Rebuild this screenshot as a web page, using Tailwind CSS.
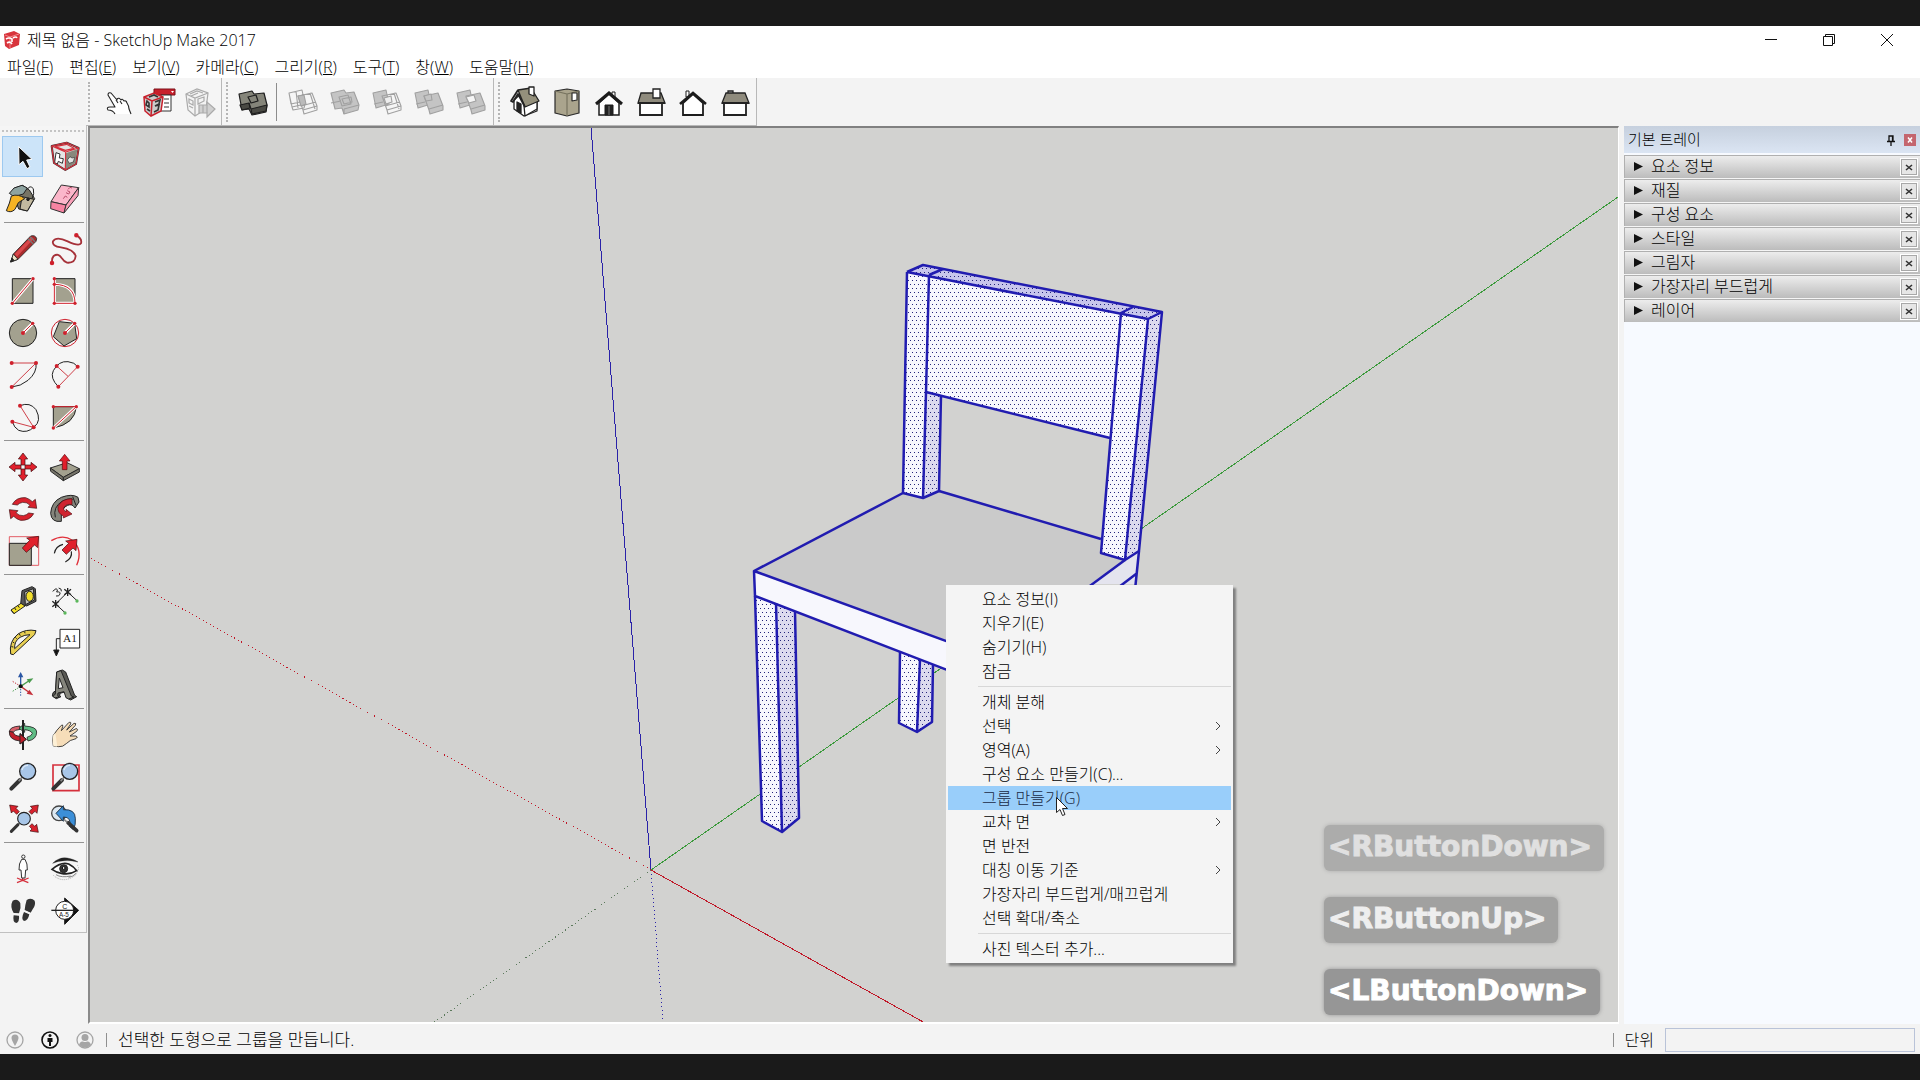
<!DOCTYPE html>
<html lang="ko">

<head>
    <meta charset="UTF-8">
    <meta name="viewport" content="width=device-width, initial-scale=1.0">
    <title>제목 없음 - SketchUp Make 2017</title>
    <script src="https://cdn.jsdelivr.net/npm/@tailwindcss/browser@4"></script>
    <style>
        body {
            font-family: 'Open Sans', 'Noto Sans CJK KR', sans-serif;
        }
    </style>
</head>

<body class="h-screen flex flex-col bg-[#1a1a1a] py-[26px] text-black text-base font-light leading-6 overflow-hidden">
    <div class="flex-1 min-h-0 flex flex-col bg-[#f3f3f3]">

        <!-- Title bar -->
        <header class="h-7 flex items-center bg-white pl-1 pr-1 shrink-0">
            <svg class="w-4 h-5" viewBox="0 0 16 20">
                <path d="M0 4 10 1 16 4 15 15 5 19 1 16Z" fill="#d8343c" />
                <path d="M1 5 6 7 15 4M6 7v11" stroke="#f0888c" fill="none" />
                <path d="M2 9q3-2 6 0v3M3 13q3-2 5 1M9 8q3-2 4 0" stroke="#fff" stroke-width="1.6" fill="none" />
            </svg>
            <h1 class="ml-[7px] flex-1">제목 없음 - SketchUp Make 2017</h1>
            <button class="w-[58px] h-7 flex items-center justify-center" aria-label="최소화">
                <svg class="w-3 h-3" viewBox="0 0 12 12" stroke="#111"><path d="M0 5.500h12" /></svg>
            </button>
            <button class="w-[58px] h-7 flex items-center justify-center" aria-label="이전 크기로 복원">
                <svg class="w-3 h-3" viewBox="0 0 12 12" stroke="#111" fill="none"><path d="M.5 2.500h9v9h-9zM2.500 2.500v-2h9v9h-2" /></svg>
            </button>
            <button class="w-[58px] h-7 flex items-center justify-center" aria-label="닫기">
                <svg class="w-3 h-3" viewBox="0 0 12 12" stroke="#111"><path d="M0 0 12 12M12 0 0 12" /></svg>
            </button>
        </header>

        <!-- Menu bar -->
        <nav class="h-6 flex items-center gap-4 bg-white pl-[7px] pt-px shrink-0">
            <button>파일(<u>F</u>)</button>
            <button>편집(<u>E</u>)</button>
            <button>보기(<u>V</u>)</button>
            <button>카메라(<u>C</u>)</button>
            <button>그리기(<u>R</u>)</button>
            <button>도구(<u>T</u>)</button>
            <button>창(<u>W</u>)</button>
            <button>도움말(<u>H</u>)</button>
        </nav>

        <!-- Top toolbars -->
        <div class="h-12 flex shrink-0 pl-[86px]">
            <div class="flex items-center border-r border-b border-[#b8b8b8] bg-[#f5f5f5]">
                <div class="w-[10px] h-10 border-l-2 border-dotted border-[#b5b5b5] ml-[2px] mr-[-3px]"></div>
                <button class="w-[42px] h-[42px]" aria-label="손">
                    <svg viewBox="-2 0 42 42" fill="#fff" stroke="#222" stroke-width="1.1" stroke-linejoin="round">
                        <path d="M18 33q-2-4-7-4-2-3 2-3l5 0-7-12q0-3 3-2l6 7 0-1q2-2 4 1 1-2 3 1 2-1 3 2 2 3 2 6l2 5" />
                        <path d="m19 19 2 3M23 20l2 3" fill="none" />
                    </svg>
                </button>
                <button class="w-[42px] h-[42px]" aria-label="3D Warehouse">
                    <svg viewBox="0 0 42 42">
                        <path d="M17 8h21v6H17z" fill="#c8202c" stroke="#7a1018" />
                        <path d="M34 10h3l-1.500 2z" fill="#fff" />
                        <path d="M24 14h10v16H23z" fill="#fff" stroke="#333" />
                        <path d="M27 18h5M27 22h5M27 26h5" stroke="#333" />
                        <path d="M7 16 17 12 26 16 24 30 14 35 8 30Z" fill="#ccc" stroke="#c8202c" stroke-width="1.500" />
                        <path d="m7 16 8 4 11-4M15 20l-1 15" fill="none" stroke="#c8202c" stroke-width="1.500" />
                        <path d="m10 20 2 2v4l-3-2zM10 28l3 2M18 21l5-2-1 4-4 2 4-1-1 5-4 2M12 16l5-2 4 2" fill="none" stroke="#333" stroke-width="1.600" />
                    </svg>
                </button>
                <button class="w-[42px] h-[42px]" aria-label="Extension Warehouse" disabled>
                    <svg viewBox="0 0 42 42" fill="#f3f3f3" stroke="#aaa" stroke-width="1.200">
                        <path d="M7 13 18 8 29 12 27 28 16 35 9 29Z" />
                        <path d="m7 13 9 4 13-5M16 17v18M10 18l4 2v4l-4-2zM10 25l4 2M19 18l6-2v4l-6 3zM11 13l7-3 6 2M12 15l7-3" fill="none" />
                        <path d="M20 24h8v-3l8 7-8 8v-4h-8z" fill="#d0d0d0" />
                        <path d="M24 24v8M28 24v8" />
                    </svg>
                </button>
            </div>
            <div class="flex items-center pr-px border-r border-b border-[#b8b8b8] bg-[#f5f5f5]">
                <div class="w-[10px] h-10 border-l-2 border-dotted border-[#b5b5b5] ml-1 mr-[-4px]"></div>
                <button class="w-[42px] h-[42px]" aria-label="외부 셸">
                    <svg viewBox="0 0 42 42" fill="#85857a" stroke="#1e1e1e" stroke-width="1.200" stroke-linejoin="round">
                        <path d="m7 13 13-3 2 3 10-1 3 12-1 7-14 3-3-6-7 1z" />
                        <path d="m19 28 16-4-1 6-14 3z" fill="#4a4a44" />
                        <path d="m8 24 9-2 1 5-8 2z" fill="#4a4a44" />
                        <path d="m16 16 8-2 2 6-7 2zM17 22l2 6" fill="none" />
                    </svg>
                </button>
                <div class="w-px h-[38px] bg-[#8c8c8c] ml-[2px] mr-[5px]"></div>
                <button class="w-[42px] h-[42px]" aria-label="교차" disabled>
                    <svg viewBox="0 0 42 42" fill="none" stroke="#a0a0a0" stroke-width="1.100" stroke-linejoin="round">
                        <path d="m7 12 13-3 3 14-13 3zM10 26l1 3 11-2 1-4M7 12l2 11 13-3M16 15l14-3 5 13-14 4zM21 29l1 4 13-4v-4M19 25l15-4M28 12l5 16M14 10l2 17" />
                        <path d="m16 15 6-1 2 9-5 2z" fill="#bbb" />
                    </svg>
                </button>
                <button class="w-[42px] h-[42px]" aria-label="결합" disabled>
                    <svg viewBox="0 0 42 42" fill="#c4c4c4" stroke="#a0a0a0" stroke-width="1.100" stroke-linejoin="round">
                        <path d="m7 12 13-3 2 3 8-1 5 13-1 5-14 4-2-6-7 1z" />
                        <path d="m7 22 10-2M20 28l15-4M15 16l9-2 3 9-9 2zM18 18l9-2 1 5-8 2zM20 28v5" fill="none" />
                    </svg>
                </button>
                <button class="w-[42px] h-[42px]" aria-label="빼기" disabled>
                    <svg viewBox="0 0 42 42" fill="none" stroke="#a0a0a0" stroke-width="1.100" stroke-linejoin="round">
                        <path d="m7 12 13-3 3 14-13 4zM8 23l9-2" fill="#c4c4c4" />
                        <path d="m16 15 14-3 5 13-14 4zM21 29l1 4 13-4v-4M19 25l15-4M28 12l5 16" />
                        <path d="m18 17 7-2 1 6-6 2z" fill="#eee" />
                    </svg>
                </button>
                <button class="w-[42px] h-[42px]" aria-label="자르기" disabled>
                    <svg viewBox="0 0 42 42" fill="#c4c4c4" stroke="#a0a0a0" stroke-width="1.100" stroke-linejoin="round">
                        <path d="m7 12 13-3 3 14-13 4zM8 23l9-2" />
                        <path d="m16 15 14-3 5 13v4l-13 4-1-4zM21 28l14-4M16 15l5 14" />
                        <path d="m16 15 7-2 1 6-6 1z" />
                    </svg>
                </button>
                <button class="w-[42px] h-[42px]" aria-label="분할" disabled>
                    <svg viewBox="0 0 42 42" fill="#c4c4c4" stroke="#a0a0a0" stroke-width="1.100" stroke-linejoin="round">
                        <path d="m7 12 13-3 3 14-13 4zM8 23l9-2" />
                        <path d="m16 15 14-3 5 13v4l-13 4-1-4zM21 28l14-4" />
                        <path d="m16 16 8-2 2 6-7 2z" fill="#f5f5f5" />
                    </svg>
                </button>
            </div>
            <div class="flex items-center border-r border-b border-[#b8b8b8] bg-[#f5f5f5]">
                <div class="w-[10px] h-10 border-l-2 border-dotted border-[#b5b5b5] ml-1 mr-[-4px]"></div>
                <button class="w-[42px] h-[42px]" aria-label="등각 투영">
                    <svg viewBox="0 0 42 42" fill="#fff" stroke="#222" stroke-width="1.300" stroke-linejoin="round">
                        <path d="m10 19 10-9 13 11v9l-13 5-10-7z" />
                        <path d="m20 25 13-6v9l-12 7z" />
                        <path d="m14 9 13-2 8 13-14 6z" fill="#94907c" />
                        <path d="m14 9-7 11 2 1 5-8 7 13" stroke-width="1.800" fill="none" />
                        <path d="M25 6h5v9l-5-2z" />
                        <path d="m13 21 4 2v9l-4-2z" fill="#222" />
                    </svg>
                </button>
                <button class="w-[42px] h-[42px]" aria-label="평면">
                    <svg viewBox="0 0 42 42" fill="#aaa48d" stroke="#2a2a2a" stroke-width="1.200" stroke-linejoin="round">
                        <path d="m9 10 12-2 12 2v22l-12 3-12-3z" />
                        <path d="m9 10 12 3 12-3M21 13v22" fill="none" stroke="#77735f" />
                        <path d="M26 12h5v7l-5 1z" fill="#fff" />
                    </svg>
                </button>
                <button class="w-[42px] h-[42px]" aria-label="정면">
                    <svg viewBox="0 0 42 42" stroke="#1c1c1c">
                        <path d="M24 11h3v5h-3z" fill="#fff" />
                        <path d="M11 22 21 13 31 22v12H11z" fill="#fff" stroke-width="1.500" />
                        <path d="M8 23 21 12 34 23" fill="none" stroke-width="3" />
                        <path d="M17 24h8v10h-8z" fill="#222" />
                        <path d="M21 25v9" stroke="#777" />
                    </svg>
                </button>
                <button class="w-[42px] h-[42px]" aria-label="오른쪽">
                    <svg viewBox="0 0 42 42" stroke="#222" stroke-width="1.300">
                        <path d="M10 22h22v12H10z" fill="#fff" stroke-width="1.800" />
                        <path d="M11 12h20l4 10H8z" fill="#8f8b7d" />
                        <path d="M8 22h27" stroke-width="2" />
                        <path d="M23 8h7v9h-7z" fill="#fff" />
                    </svg>
                </button>
                <button class="w-[42px] h-[42px]" aria-label="뒤">
                    <svg viewBox="0 0 42 42" stroke="#1c1c1c" fill="#fff">
                        <path d="M14 10h3v6h-3z" />
                        <path d="M11 22 21 13 31 22v12H11z" stroke-width="1.800" />
                        <path d="M8 23 21 12 34 23" fill="none" stroke-width="2.600" />
                    </svg>
                </button>
                <button class="w-[42px] h-[42px]" aria-label="왼쪽">
                    <svg viewBox="0 0 42 42" stroke="#222" stroke-width="1.300">
                        <path d="M14 10h5v3h-5z" fill="#ddd" />
                        <path d="M10 22h22v12H10z" fill="#fff" stroke-width="1.800" />
                        <path d="M12 12h19l4 10H8z" fill="#8f8b7d" />
                        <path d="M8 22h27" stroke-width="2" />
                    </svg>
                </button>
            </div>
        </div>

        <main class="flex-1 min-h-0 flex">
            <!-- Large tool set -->
            <aside class="w-[88px] shrink-0">
                <div class="w-[87px] pl-[2px] border-r border-b border-[#c0c0c0] bg-[#f5f5f5]">
                    <div class="h-[10px] pt-1 pr-[2px]"><div class="border-t-2 border-dotted border-[#c4c4c4]"></div></div>
                    <div class="grid grid-cols-2 w-[84px]">
                        <button class="h-[42px] relative" aria-label="선택">
                            <span class="absolute inset-0 mb-px mr-px bg-[#cce4f9] border border-[#9dc9f0]"></span>
                            <svg class="relative" viewBox="6 48 126 126"><path d="m56 80 1 54 12-10 12 22 9-5-10-21 16-2z" fill="#111" stroke="#fff" stroke-width="3" /></svg>
                        </button>
                        <button class="h-[42px]" aria-label="구성 요소 만들기">
                            <svg viewBox="132 48 126 126" stroke-linejoin="round">
                                <path d="m155 78 45-10 36 16-8 48-32 18-34-21z" fill="#e5e5e5" stroke="#333" stroke-width="6" />
                                <path d="m196 100 36-12-6 42-28 17z" fill="#88887c" />
                                <path d="m168 98 12 4-2 12 12 2-3 14-12-6-3 8-8-4z" fill="#fff" stroke="#333" stroke-width="3" />
                                <path d="m202 120 8-10 6 4 8-2-4 14-12 4z" fill="#e5e5e5" stroke="#333" stroke-width="2" />
                                <path d="m155 78 45-10 36 16-8 48-32 18-34-21zM155 78l42 18 39-12M197 96l-1 54M166 80l34-7 22 12-26 6z" fill="none" stroke="#d5303c" stroke-width="3.500" />
                            </svg>
                        </button>
                        <button class="h-[42px]" aria-label="페인트 통">
                            <svg viewBox="6 174 126 126" stroke="#222" stroke-width="3" stroke-linejoin="round">
                                <path d="m44 204 24-8 20 14 16 26-22 37-26-6-14-40z" fill="#777465" />
                                <path d="m66 230 36 8-20 35-22-6z" fill="#c3baa0" />
                                <path d="m28 220 14-16 24-8 16 8-12 18-28 8z" fill="#8ea3a0" />
                                <path d="M34 228q-4 20-15 44 14 8 26-4l10-20 19-12q-18-16-40-8z" fill="#f5b324" />
                                <path d="M82 208q8-14 18-2 4 16-4 30" fill="none" />
                                <circle cx="84" cy="238" r="4" fill="#222" />
                            </svg>
                        </button>
                        <button class="h-[42px]" aria-label="지우개">
                            <svg viewBox="132 174 126 126" stroke="#333" stroke-width="3" stroke-linejoin="round">
                                <path d="m184 195 52 8-38 52-45-10z" fill="#fbb6ca" />
                                <path d="m153 245 45 10-6 24-40-13z" fill="#f783a2" />
                                <path d="m198 255 38-52-2 24-42 52z" fill="#f9a0b8" />
                                <path d="m190 236 6-8 6 4m-4-14 8 4 4-6-8-4m2-4 6-6 6 2" stroke="#b54b68" fill="none" />
                            </svg>
                        </button>
                    </div>
                    <div class="h-px bg-[#949494] mt-[2px] mb-[5px] mx-[2px] w-20"></div>
                    <div class="grid grid-cols-2 w-[84px]">
                        <button class="h-[42px]" aria-label="선">
                            <svg viewBox="6 324 126 126" stroke="#222" stroke-width="2.500" stroke-linejoin="round">
                                <path d="m32 426 8-24 52-54q14-4 18 8l-2 8-54 54z" fill="#a92b2c" />
                                <path d="m44 402 50-52 7 6-50 54z" fill="#d9484b" stroke="none" />
                                <path d="m32 426 8-24 14 16z" fill="#efe4c8" />
                                <path d="m32 426 4-12 6 7z" fill="#222" />
                                <path d="m84 356 16 16M90 350l16 16" stroke="#777" stroke-width="4" />
                            </svg>
                        </button>
                        <button class="h-[42px]" aria-label="자유형">
                            <svg viewBox="132 324 126 126" fill="none" stroke="#a63139" stroke-width="5.500">
                                <path d="M229 346q18 10 14 24-6 10-40-6-34-16-44 0-4 14 24 18 38 6 44 26-2 22-26 20-8-2-16-14-10-16-24-6-6 6-5 20" />
                                <circle cx="229" cy="346" r="4" fill="#cf202c" stroke="#cf202c" /><circle cx="156" cy="429" r="4" fill="#cf202c" stroke="#cf202c" />
                            </svg>
                        </button>
                        <button class="h-[42px]" aria-label="직사각형">
                            <svg viewBox="6 450 126 126">
                                <path d="M37 476h62v74H37z" fill="#a3a18f" stroke="#222" stroke-width="3" />
                                <path d="m37 550 62-74" stroke="#fff" stroke-width="9" /><path d="m37 550 62-74" stroke="#cf202c" stroke-width="3" />
                                <circle cx="37" cy="550" r="5" fill="#cf202c" /><circle cx="99" cy="476" r="5" fill="#cf202c" />
                            </svg>
                        </button>
                        <button class="h-[42px]" aria-label="회전된 직사각형">
                            <svg viewBox="132 450 126 126" fill="none">
                                <path d="M163 476h62v74h-62z" fill="#a3a18f" stroke="#222" stroke-width="3" />
                                <path d="M163 476v74h62q0-56-62-57" stroke="#fff" stroke-width="9" /><path d="M163 476v74h62q0-56-62-57" stroke="#cf202c" stroke-width="3" />
                                <g fill="#cf202c"><circle cx="163" cy="476" r="5" /><circle cx="163" cy="493" r="5" /><circle cx="163" cy="550" r="5" /><circle cx="225" cy="550" r="5" /></g>
                            </svg>
                        </button>
                        <button class="h-[42px]" aria-label="원">
                            <svg viewBox="6 576 126 126">
                                <circle cx="69" cy="639" r="41" fill="#a3a18f" stroke="#222" stroke-width="3" />
                                <path d="m69 639 29-29" stroke="#fff" stroke-width="10" /><path d="m69 639 29-29" stroke="#cf202c" stroke-width="3" />
                                <circle cx="69" cy="639" r="6" fill="#cf202c" /><circle cx="98" cy="610" r="5" fill="#cf202c" />
                            </svg>
                        </button>
                        <button class="h-[42px]" aria-label="다각형">
                            <svg viewBox="132 576 126 126">
                                <circle cx="195" cy="639" r="41" fill="none" stroke="#cf202c" stroke-width="3" />
                                <path d="m224 610 6 46-38 22-32-28 18-45z" fill="#a3a18f" stroke="#222" stroke-width="3" />
                                <path d="m195 639 29-29" stroke="#fff" stroke-width="10" /><path d="m195 639 29-29" stroke="#cf202c" stroke-width="3" />
                                <circle cx="195" cy="639" r="6" fill="#cf202c" /><circle cx="224" cy="610" r="5" fill="#cf202c" />
                            </svg>
                        </button>
                        <button class="h-[42px]" aria-label="호">
                            <svg viewBox="6 702 126 126" fill="none" stroke-width="3">
                                <path d="M108 729q4 28-24 52-22 18-49 20" stroke="#222" />
                                <path d="M35 729h73L35 801" stroke="#cf4049" />
                                <g fill="#cf202c"><circle cx="35" cy="729" r="6" /><circle cx="108" cy="729" r="6" /><circle cx="35" cy="801" r="6" /></g>
                            </svg>
                        </button>
                        <button class="h-[42px]" aria-label="2점 호">
                            <svg viewBox="132 702 126 126" fill="none" stroke-width="3">
                                <path d="M175 800q-26-26-15-48 16-30 44-27 20 2 29 15" stroke="#222" />
                                <path d="m175 800 58-60M170 738l34 31" stroke="#cf4049" />
                                <g fill="#cf202c"><circle cx="170" cy="738" r="6" /><circle cx="233" cy="740" r="6" /><circle cx="175" cy="800" r="6" /></g>
                            </svg>
                        </button>
                        <button class="h-[42px]" aria-label="3점 호">
                            <svg viewBox="6 828 126 126" fill="none" stroke-width="3">
                                <path d="M60 857q30-12 48 12 18 34-6 52-20 20-46 10-14-8-19-26" stroke="#222" />
                                <path d="m60 857 41 65-64-17" stroke="#cf4049" />
                                <g fill="#cf202c"><circle cx="60" cy="857" r="6" /><circle cx="37" cy="905" r="6" /><circle cx="101" cy="922" r="6" /></g>
                            </svg>
                        </button>
                        <button class="h-[42px]" aria-label="파이">
                            <svg viewBox="132 828 126 126" stroke-width="3">
                                <path d="M160 860h69q-4 52-69 64z" fill="#a3a18f" stroke="#222" />
                                <path d="m160 924 69-64" stroke="#fff" stroke-width="9" /><path d="m160 924 69-64h-69" stroke="#cf202c" fill="none" />
                                <g fill="#cf202c"><circle cx="160" cy="860" r="5" /><circle cx="229" cy="860" r="5" /><circle cx="160" cy="924" r="5" /></g>
                            </svg>
                        </button>
                    </div>
                    <div class="h-px bg-[#949494] mt-[2px] mb-[5px] mx-[2px] w-20"></div>
                    <div class="grid grid-cols-2 w-[84px]">
                        <button class="h-[42px]" aria-label="이동">
                            <svg viewBox="6 48 126 126" fill="#e0202c" stroke="#3a0a0c" stroke-width="2">
                                <path id="arm" d="m69 69 14 18h-8v18H63V87h-8z" />
                                <use href="#arm" transform="rotate(90 69 111)" /><use href="#arm" transform="rotate(180 69 111)" /><use href="#arm" transform="rotate(270 69 111)" />
                            </svg>
                        </button>
                        <button class="h-[42px]" aria-label="밀기/끌기">
                            <svg viewBox="132 48 126 126" stroke="#2a2a2a" stroke-width="3" stroke-linejoin="round">
                                <path d="m151 114 50-16 37 18-48 26z" fill="#a3a18f" />
                                <path d="m151 114 39 28v10l-38-28zM238 116v10l-48 26v-10z" fill="#77756a" />
                                <path d="m194 73 16 20h-9v26h-14V93h-9z" fill="#e0202c" stroke="#5a0a10" stroke-width="2" />
                            </svg>
                        </button>
                        <button class="h-[42px]" aria-label="회전">
                            <svg viewBox="6 174 126 126" fill="#d8222d" stroke="#3a0a0c" stroke-width="2">
                                <path id="turn" d="M37 223q12-22 40-20 12 4 20 12l9-7 4 27-26-3 6-6q-8-10-22-9-10 2-16 8z" />
                                <use href="#turn" transform="rotate(180 69 237)" />
                            </svg>
                        </button>
                        <button class="h-[42px]" aria-label="따라가기">
                            <svg viewBox="132 174 126 126" stroke="#222" stroke-width="3" stroke-linejoin="round">
                                <path d="M184 274q-30 4-32-24 2-34 32-48 32-12 50 0l3 14-12 18q-8-14-22-8-18 8-19 28z" fill="#85857c" />
                                <path d="M166 262q-8-30 20-48 20-10 32-6M218 200l10 26" fill="none" />
                                <path d="M216 206q-32 0-42 24-2 20 16 28l0 6 26-12-18-14v8q-10-6-6-14 8-12 24-8z" fill="#cf2430" stroke="#5a0a10" stroke-width="2" />
                            </svg>
                        </button>
                        <button class="h-[42px]" aria-label="배율">
                            <svg viewBox="6 300 126 126">
                                <path d="M28 320h88v86H28z" fill="none" stroke="#e0404a" stroke-width="2.500" />
                                <path d="M28 340h66v66H28z" fill="#a3a18f" stroke="#222" stroke-width="3" />
                                <path d="m116 319-3 34-9-8-25 22-12-13 22-23-9-7z" fill="#e0202c" stroke="#3a0a0c" stroke-width="2" />
                            </svg>
                        </button>
                        <button class="h-[42px]" aria-label="오프셋">
                            <svg viewBox="132 300 126 126" fill="none">
                                <path d="M154 332q34-20 62-2 34 28 14 76" stroke="#e0303a" stroke-width="4" />
                                <path d="M163 370q4-22 26-27M214 364q4 20-18 32" stroke="#222" stroke-width="3.500" />
                                <path d="m231 328-3 34-9-8-20 19-13-13 20-20-9-7z" fill="#e0202c" stroke="#3a0a0c" stroke-width="2" />
                            </svg>
                        </button>
                    </div>
                    <div class="h-px bg-[#949494] mt-[2px] mb-[5px] mx-[2px] w-20"></div>
                    <div class="grid grid-cols-2 w-[84px]">
                        <button class="h-[42px]" aria-label="줄자 도구">
                            <svg viewBox="6 450 126 126" stroke="#222" stroke-width="3" stroke-linejoin="round">
                                <path d="m66 482 30-12 10 6 2 38-28 14-18-6z" fill="#555" />
                                <path d="m74 486 26-10 3 34-27 14z" fill="#c4c4be" />
                                <ellipse cx="89" cy="499" rx="11" ry="15" fill="#f3df2c" />
                                <path d="m33 540 30-20 12 8-33 23z" fill="#f3df2c" />
                                <path d="m33 540 9 11M44 534l4 6M54 527l4 6" fill="none" />
                            </svg>
                        </button>
                        <button class="h-[42px]" aria-label="치수">
                            <svg viewBox="132 450 126 126" fill="none" stroke="#222" stroke-width="3">
                                <path d="m167 522 36-36M167 522l28 26M203 486l28 26" />
                                <path d="M157 514l20 16M157 530l20-16M167 510v24M193 478l20 16M193 494l20-16M203 474v24" stroke-width="4" />
                                <path d="m158 484 10-8q8 2 2 10 12-2 10 6-2 8-12 6M176 474q10 2 8 10" />
                                <circle cx="195" cy="549" r="5" fill="#5bb75b" stroke="none" /><circle cx="231" cy="513" r="5" fill="#5bb75b" stroke="none" />
                            </svg>
                        </button>
                        <button class="h-[42px]" aria-label="각도기">
                            <svg viewBox="6 576 126 126" stroke="#222" stroke-width="3" stroke-linejoin="round">
                                <path d="M32 672q-6-38 22-60 24-16 54-10l-4 12-64 60z" fill="#e8cf52" />
                                <path d="M44 656q-2-22 16-34 14-8 30-8z" fill="#f5f5f5" />
                                <path d="m34 650 6 1M38 636l5 3M46 622l4 4M58 612l3 5M74 605l1 5" />
                            </svg>
                        </button>
                        <button class="h-[42px]" aria-label="텍스트">
                            <svg viewBox="132 576 126 126" fill="none" stroke="#222" stroke-width="3">
                                <path d="M180 598h59v56h-59z" fill="#fff" />
                                <path d="M180 626h-11v36" /><path d="m161 660 8 18 8-18z" fill="#111" />
                                <text x="189" y="636" font-family="Liberation Serif, serif" font-size="34" fill="#222" stroke="none">A1</text>
                            </svg>
                        </button>
                        <button class="h-[42px]" aria-label="축">
                            <svg viewBox="6 702 126 126" fill="none" stroke-width="4">
                                <path d="M62 769v-28" stroke="#2b57a5" /><path d="m62 726-8 16h16z" fill="#2b57a5" />
                                <path d="m62 769 24-16" stroke="#4a9b4e" /><path d="m100 745-20 3 8 12z" fill="#4a9b4e" />
                                <path d="m62 769 24 17" stroke="#c5303a" /><path d="m100 796-20-5 8-12z" fill="#c5303a" />
                                <path d="M62 769v30" stroke="#2b57a5" stroke-dasharray="4 4" stroke-width="3" />
                                <path d="m62 769-26 16" stroke="#4a9b4e" stroke-dasharray="4 4" stroke-width="3" />
                                <path d="m62 769-26-16" stroke="#c5303a" stroke-dasharray="4 4" stroke-width="3" />
                                <circle cx="62" cy="769" r="6" fill="#111" />
                            </svg>
                        </button>
                        <button class="h-[42px]" aria-label="3D 텍스트">
                            <svg viewBox="132 702 126 126" stroke="#222" stroke-width="3" stroke-linejoin="round">
                                <path d="m170 726 17-6 10 6 27 70 6 4-18 10-14-8 1-8-5-8-14 4-1 8 4 2-14 6-12-8 2-10 8-6z" fill="#595954" />
                                <path d="m170 726 13-4 31 76 8 3-16 6-8-4-6-18-18 4-1 8 4 3-12 4-6-5 7-7z" fill="#85857c" />
                                <path d="m178 744-3 32 14-3z" fill="#f5f5f5" />
                            </svg>
                        </button>
                    </div>
                    <div class="h-px bg-[#949494] mt-[2px] mb-[5px] mx-[2px] w-20"></div>
                    <div class="grid grid-cols-2 w-[84px]">
                        <button class="h-[42px]" aria-label="궤도">
                            <svg viewBox="6 42 126 126" stroke="#222" stroke-width="2.500" stroke-linejoin="round">
                                <path d="M60 78q-32 2-32 18h12q4-6 20-8z" fill="#d8606a" />
                                <path d="M28 94q-2 26 32 29v9l19-14-19-18v9q-18-2-20-12z" fill="#c01f2c" />
                                <path d="M74 70v8q36 2 36 18 0 22-26 27l-3-11q14-4 16-12-4-9-23-11v8L57 85z" fill="#5fbd85" />
                                <path d="M69 60v90" stroke-width="6" />
                                <path d="M60 102v30l19-14z" fill="#c01f2c" />
                            </svg>
                        </button>
                        <button class="h-[42px]" aria-label="이동 보기">
                            <svg viewBox="132 42 126 126" fill="#f6ddb9" stroke="#222" stroke-width="2.500" stroke-linejoin="round">
                                <path d="M160 138q-4-20 0-32 10-16 24-30 6-4 4 4l-4 12 22-24q8-4 6 4l-12 18 22-20q8-2 4 6l-18 20 20-10q8 0 2 8l-20 14h18q8 2 0 8-20 4-28 14-12 12-24 10z" />
                                <path d="M160 138q-4-20 0-32l6-8 6 42z" fill="#fdf0d6" stroke="none" />
                            </svg>
                        </button>
                        <button class="h-[42px]" aria-label="확대/축소">
                            <svg viewBox="6 168 126 126" stroke="#222">
                                <path d="m34 266 26-26" stroke="#333" stroke-width="12" stroke-linecap="round" /><path d="m56 244 10-12" stroke="#888" stroke-width="5" />
                                <circle cx="83" cy="214" r="24" fill="#a8c6e8" stroke-width="4" />
                                <path d="M66 210q4-14 18-14" stroke="#dbe9f7" stroke-width="4" fill="none" />
                            </svg>
                        </button>
                        <button class="h-[42px]" aria-label="창 확대/축소">
                            <svg viewBox="132 168 126 126" stroke="#222">
                                <path d="M159 195h78v77h-78z" fill="none" stroke="#d5303c" stroke-width="5" />
                                <path d="m160 266 26-26" stroke="#333" stroke-width="12" stroke-linecap="round" /><path d="m182 244 10-12" stroke="#888" stroke-width="5" />
                                <circle cx="209" cy="214" r="24" fill="#a8c6e8" stroke-width="4" />
                                <path d="M192 210q4-14 18-14" stroke="#dbe9f7" stroke-width="4" fill="none" />
                            </svg>
                        </button>
                        <button class="h-[42px]" aria-label="범위 확대/축소">
                            <svg viewBox="6 294 126 126" stroke="#222">
                                <path d="m34 394 20-20" stroke="#333" stroke-width="9" stroke-linecap="round" />
                                <circle cx="72" cy="356" r="19" fill="#a8c6e8" stroke-width="3.500" />
                                <g fill="#d8222d" stroke="#3a0a0c" stroke-width="2">
                                    <path d="m29 315 25 4-6 6 10 10-8 8-10-10-6 6z" /><path d="m115 315-4 25-6-6-10 9-8-8 10-10-6-6z" /><path d="m115 397-25-4 6-6-8-8 8-8 8 8 6-6z" />
                                </g>
                            </svg>
                        </button>
                        <button class="h-[42px]" aria-label="이전">
                            <svg viewBox="132 294 126 126" stroke="#222" stroke-linejoin="round">
                                <circle cx="177" cy="340" r="22" fill="#dce8f2" stroke="#444" stroke-width="4" />
                                <path d="M168 340 190 317v12q36-2 36 26 2 20-6 34l-12-10q8-28-18-28v13z" fill="#3c8fd8" stroke="#123" stroke-width="2.500" />
                                <path d="m204 368 26 24" stroke="#333" stroke-width="11" stroke-linecap="round" /><path d="m192 358 10 9" stroke="#888" stroke-width="5" />
                            </svg>
                        </button>
                    </div>
                    <div class="h-px bg-[#949494] mt-[2px] mb-[5px] mx-[2px] w-20"></div>
                    <div class="grid grid-cols-2 w-[84px]">
                        <button class="h-[42px]" aria-label="카메라 배치">
                            <svg viewBox="6 444 126 126" fill="#fff" stroke="#333" stroke-width="3">
                                <path d="m51 534 34 14M86 534l-35 14M68 530v12" stroke="#d5303c" stroke-width="4" />
                                <circle cx="70" cy="470" r="5" />
                                <path d="M65 478h10q8 12 7 32h-5l-2 24H65l-2-24h-6q-1-20 8-32z" />
                            </svg>
                        </button>
                        <button class="h-[42px]" aria-label="둘러보기">
                            <svg viewBox="132 444 126 126" fill="none" stroke="#222">
                                <path d="M160 526q30 26 66 0l8-14q4-14-2-16" stroke="#aaa" stroke-width="3" stroke-dasharray="3 3" />
                                <path d="M158 490q20-20 44-16 22 4 32 12-24-6-40-4-20 0-36 8z" fill="#222" />
                                <path d="M156 508q28-24 50-16 16 8 24 20-22 14-46 8-14-2-28-12z" fill="#fff" stroke-width="5" />
                                <circle cx="191" cy="506" r="12" fill="#333" stroke-width="3" /><circle cx="191" cy="504" r="4" fill="#fff" stroke="#111" stroke-width="3" />
                                <path d="M168 524q16 10 44 4M206 532q14-2 22-12" stroke="#888" stroke-width="3" />
                            </svg>
                        </button>
                        <button class="h-[42px]" aria-label="걷기">
                            <svg viewBox="6 570 126 126" fill="#333">
                                <path d="M38 602q16-8 23 8 3 14-4 30l-16-1q-12-20-3-37zM41 646l16 1q2 18-8 22-12-2-8-23z" />
                                <path d="M80 600q14-8 24 2 4 12-6 26l-6 10-18-8q2-18 6-30zM72 636l16 7q-4 20-16 20-10-6 0-27z" />
                                <path d="m41 642 17 2M73 633l18 8" stroke="#f5f5f5" stroke-width="4" />
                            </svg>
                        </button>
                        <button class="h-[42px]" aria-label="단면">
                            <svg viewBox="132 570 126 126" stroke="#222" stroke-width="3">
                                <path d="m194 594 42 37-42 42z" fill="#111" />
                                <circle cx="194" cy="631" r="27" fill="#fff" />
                                <path d="M154 631h76" stroke-width="4" />
                                <text x="187" y="626" font-family="Liberation Sans, sans-serif" font-size="21" fill="#222" stroke="none">C</text>
                                <text x="177" y="650" font-family="Liberation Sans, sans-serif" font-size="19" fill="#222" stroke="none">A-5</text>
                            </svg>
                        </button>
                    </div>
                </div>
            </aside>

            <!-- Modelling view -->
            <section class="flex-1 min-w-0 relative border-t-2 border-l-2 border-t-[#808080] border-l-[#8a8a8a] border-b-2 border-b-white border-r border-r-white bg-[#d2d2d0]">
                <svg class="absolute inset-0 w-full h-full" viewBox="90 128 1528 894" preserveAspectRatio="xMinYMin slice">
                    <defs>
                        <pattern id="dots" width="4" height="8" patternUnits="userSpaceOnUse" shape-rendering="crispEdges">
                            <rect width="1" height="1" fill="#26267c" /><rect x="2" y="4" width="1" height="1" fill="#26267c" />
                        </pattern>
                    </defs>
                    <!-- Axes -->
                    <g fill="none" shape-rendering="crispEdges">
                        <path d="M591 127 651 870" stroke="#2a22a8" />
                        <path d="M651 870 663 1023" stroke="#2a22a8" stroke-dasharray="1 3" />
                        <path d="M651 870 1618 197" stroke="#3c9a3c" />
                        <path d="M651 870 433 1023" stroke="#5c7a5c" stroke-dasharray="1 3" />
                        <path d="M651 870 925 1023" stroke="#c01828" />
                        <path d="M651 870 89 557" stroke="#c01828" stroke-dasharray="1 3" />
                    </g>
                    <!-- Chair -->
                    <g stroke-linejoin="round">
                        <path d="M754 571 903 493 923 498 939 491 1101 539 1101 553 1125 560 1090 584 1060 684Z" fill="#cacaca" />
                        <path d="M1125 560 1139 551 1136 584 1090 584Z" fill="#e4e4ee" />
                        <path d="M754 571 1020 669V698L755 596Z" fill="#f7f7fd" />
                        <path d="M907 272 923 265 1162 312 1148 319Z" fill="#c8c6ec" />
                        <path d="M907 272 929 275 926 392 923 498 903 493ZM929 275 1121 313 1110 438 926 392ZM1121 313 1148 319 1125 560 1101 553ZM755 596 776 603 782 832 762 821ZM900 652 920 659 917 732 899 723Z" fill="#f7f7fd" />
                        <path d="M926 392 941 395 939 491 923 498ZM1148 319 1162 312 1139 551 1125 560ZM776 603 795 611 799 818 782 832ZM920 659 933 664 932 722 917 732Z" fill="#dcdaee" />
                        <path d="M907 272 923 265 1162 312 1139 551 1125 560 1101 553 1110 438 941 395 939 491 923 498 903 493ZM755 596 795 611 799 818 782 832 762 821ZM900 652 933 664 932 722 917 732 899 723Z" fill="url(#dots)" />
                        <g fill="none" stroke="#211cb0" stroke-width="2.500">
                            <path d="M907 272 923 265 1162 312 1139 551 1125 560 1101 553 1121 313M907 272 1148 319 1162 312M1148 319 1125 560M929 275 943 269M1121 313 1133 307" />
                            <path d="M907 272 903 493 923 498 939 491 941 395M929 275 926 392 923 498M926 392 1110 438" />
                            <path d="M903 493 754 571 1020 668M939 491 1101 539M754 571 755 596 1020 698M1125 560 1064 605M1139 551 1135 590M1136 574 1094 606" />
                            <path d="M755 596 762 821 782 832 799 818 795 611M776 603 782 832M900 652 899 723 917 732 932 722 933 664M920 659 917 732" />
                        </g>
                    </g>
                </svg>

                <!-- Pressed mouse buttons -->
                <div class="absolute right-[11px] bottom-[7px] w-[283px] flex flex-col items-start gap-[26px] font-['DejaVu_Sans'] font-bold text-[28px] leading-[44px]">
                    <div class="h-[46px] pl-1 pr-3 rounded-md bg-[#acacab] text-[#e0e0e0] shadow-[0_0_4px_#acacab] [-webkit-text-stroke:1px_currentColor]">&lt;RButtonDown&gt;</div>
                    <div class="h-[46px] pl-1 pr-3 rounded-md bg-[#a1a1a0] text-[#eeeeee] shadow-[0_0_4px_#a1a1a0] [-webkit-text-stroke:1px_currentColor]">&lt;RButtonUp&gt;</div>
                    <div class="h-[46px] pl-1 pr-3 rounded-md bg-[#969696] text-white shadow-[0_0_4px_#969696] [-webkit-text-stroke:1px_currentColor]">&lt;LButtonDown&gt;</div>
                </div>

                <!-- Context menu -->
                <div class="absolute left-[856px] top-[457px] w-[287px] p-[2px] bg-[#f4f4f4] shadow-[3px_3px_2px_#808080] flex flex-col" role="menu">
                    <button class="h-6 pl-[34px] text-left" role="menuitem">요소 정보(I)</button>
                    <button class="h-6 pl-[34px] text-left" role="menuitem">지우기(E)</button>
                    <button class="h-6 pl-[34px] text-left" role="menuitem">숨기기(H)</button>
                    <button class="h-6 pl-[34px] text-left" role="menuitem">잠금</button>
                    <hr class="ml-[30px] my-[3px] border-[#d7d7d7]">
                    <button class="h-6 pl-[34px] text-left" role="menuitem">개체 분해</button>
                    <button class="h-6 pl-[34px] pr-[10px] flex items-center justify-between" role="menuitem">선택
                        <svg class="w-[6px] h-2" viewBox="0 0 6 8" fill="none" stroke="#444"><path d="m1 0 4 4-4 4" /></svg></button>
                    <button class="h-6 pl-[34px] pr-[10px] flex items-center justify-between" role="menuitem">영역(A)
                        <svg class="w-[6px] h-2" viewBox="0 0 6 8" fill="none" stroke="#444"><path d="m1 0 4 4-4 4" /></svg></button>
                    <button class="h-6 pl-[34px] text-left" role="menuitem">구성 요소 만들기(C)...</button>
                    <button class="h-6 pl-[34px] text-left relative bg-[#99cefa] text-[#1a2a44]" role="menuitem">그룹 만들기(G)
                        <svg class="absolute left-[108px] top-[11px] w-3 h-[19px]" viewBox="0 0 12 19"><path d="M.5.500v15l3.500-3 2.500 6 2.500-1-2.500-6h5z" fill="#fff" stroke="#222" /></svg></button>
                    <button class="h-6 pl-[34px] pr-[10px] flex items-center justify-between" role="menuitem">교차 면
                        <svg class="w-[6px] h-2" viewBox="0 0 6 8" fill="none" stroke="#444"><path d="m1 0 4 4-4 4" /></svg></button>
                    <button class="h-6 pl-[34px] text-left" role="menuitem">면 반전</button>
                    <button class="h-6 pl-[34px] pr-[10px] flex items-center justify-between" role="menuitem">대칭 이동 기준
                        <svg class="w-[6px] h-2" viewBox="0 0 6 8" fill="none" stroke="#444"><path d="m1 0 4 4-4 4" /></svg></button>
                    <button class="h-6 pl-[34px] text-left" role="menuitem">가장자리 부드럽게/매끄럽게</button>
                    <button class="h-6 pl-[34px] text-left" role="menuitem">선택 확대/축소</button>
                    <hr class="ml-[30px] my-[3px] border-[#d7d7d7]">
                    <button class="h-6 pl-[34px] text-left" role="menuitem">사진 텍스터 추가...</button>
                </div>
            </section>

            <!-- Default tray -->
            <aside class="w-[301px] shrink-0 pl-[5px]">
                <div class="h-full bg-[#f7faff] flex flex-col">
                    <div class="h-[27px] mb-[2px] flex items-center pl-1 pr-1 bg-linear-to-b from-[#c6d0de] to-[#dbe5f3]">
                        <h2 class="flex-1 pb-[2px] text-[15px]">기본 트레이</h2>
                        <button class="w-3 h-3 mr-[7px]" aria-label="자동 숨기기"><svg viewBox="0 0 12 12" fill="none" stroke="#111" stroke-width="1.300"><path d="M4 7V2h4v5M2 7.500h8M6 8v4M7.500 2v5" /></svg></button>
                        <button class="w-3 h-3 bg-[#c4666e]" aria-label="트레이 닫기"><svg viewBox="0 0 12 12" stroke="#fff" stroke-width="1.500"><path d="m4 3.500 4 5M8 3.500l-4 5" /></svg></button>
                    </div>
                    <div id="trayPanels" class="flex flex-col gap-px bg-[#f5f5f5]"></div>
                </div>
            </aside>
        </main>

        <!-- Status bar -->
        <footer class="h-[30px] flex items-center shrink-0 pt-[2px] pl-[6px] pr-[5px]">
            <button class="w-[18px] h-[18px]" aria-label="위치"><svg viewBox="0 0 18 18"><circle cx="9" cy="9" r="8" fill="none" stroke="#a5a5a5" stroke-width="1.300" /><path d="M9 15Q5.500 9 5.500 7a3.500 3.500 0 0 1 7 0Q12.500 9 9 15z" fill="#a5a5a5" /></svg></button>
            <button class="w-[18px] h-[18px] ml-[17px]" aria-label="크레딧"><svg viewBox="0 0 18 18"><circle cx="9" cy="9" r="8" fill="none" stroke="#111" stroke-width="1.600" /><circle cx="9" cy="4.500" r="1.500" fill="#111" /><path d="M6.500 7h5v4H10v4H8v-4H6.500z" fill="#111" /></svg></button>
            <button class="w-[18px] h-[18px] ml-[17px]" aria-label="로그인"><svg viewBox="0 0 18 18" fill="#a5a5a5"><circle cx="9" cy="9" r="8" fill="none" stroke="#a5a5a5" stroke-width="1.300" /><circle cx="9" cy="6.500" r="3.500" /><path d="M3 14q1-4 4-3.500 2 1 4 0 3-.5 4 3.500-6 5-12 0z" /></svg></button>
            <div class="w-px h-[14px] bg-[#8f8f8f] ml-3 mr-[11px]"></div>
            <p class="flex-1 text-[17px]">선택한 도형으로 그룹을 만듭니다.</p>
            <div class="w-px h-[14px] bg-[#8f8f8f] mr-[11px]"></div>
            <label for="measure">단위</label>
            <input id="measure" type="text" class="ml-[11px] w-[250px] h-6 border border-[#b9c3d8] bg-transparent">
        </footer>
    </div>

    <script>
        // Collapsed panels of the tray
        const panels = ['요소 정보', '재질', '구성 요소', '스타일', '그림자', '가장자리 부드럽게', '레이어'];

        document.getElementById('trayPanels').innerHTML = panels.map(name => `
            <div class="h-[23px] flex items-center pl-[9px] pr-[3px] border-t border-l border-[#b0b0b0] bg-linear-to-b from-[#ededed] to-[#bcbcbc]">
                <button class="flex-1 flex items-center gap-2 pb-[2px]"><svg class="w-[9px] h-[9px]" viewBox="0 0 9 9"><path d="M0 0 9 4.500 0 9z" fill="#111" /></svg>${name}</button>
                <button class="w-4 h-4 border border-[#a8a8a8] bg-[#e6e6e6] outline outline-white" aria-label="${name} 닫기"><svg viewBox="0 0 14 14" stroke="#333" stroke-width="1.600"><path d="m4 5 6 5M10 5l-6 5" /></svg></button>
            </div>`).join('');
    </script>
</body>

</html>
